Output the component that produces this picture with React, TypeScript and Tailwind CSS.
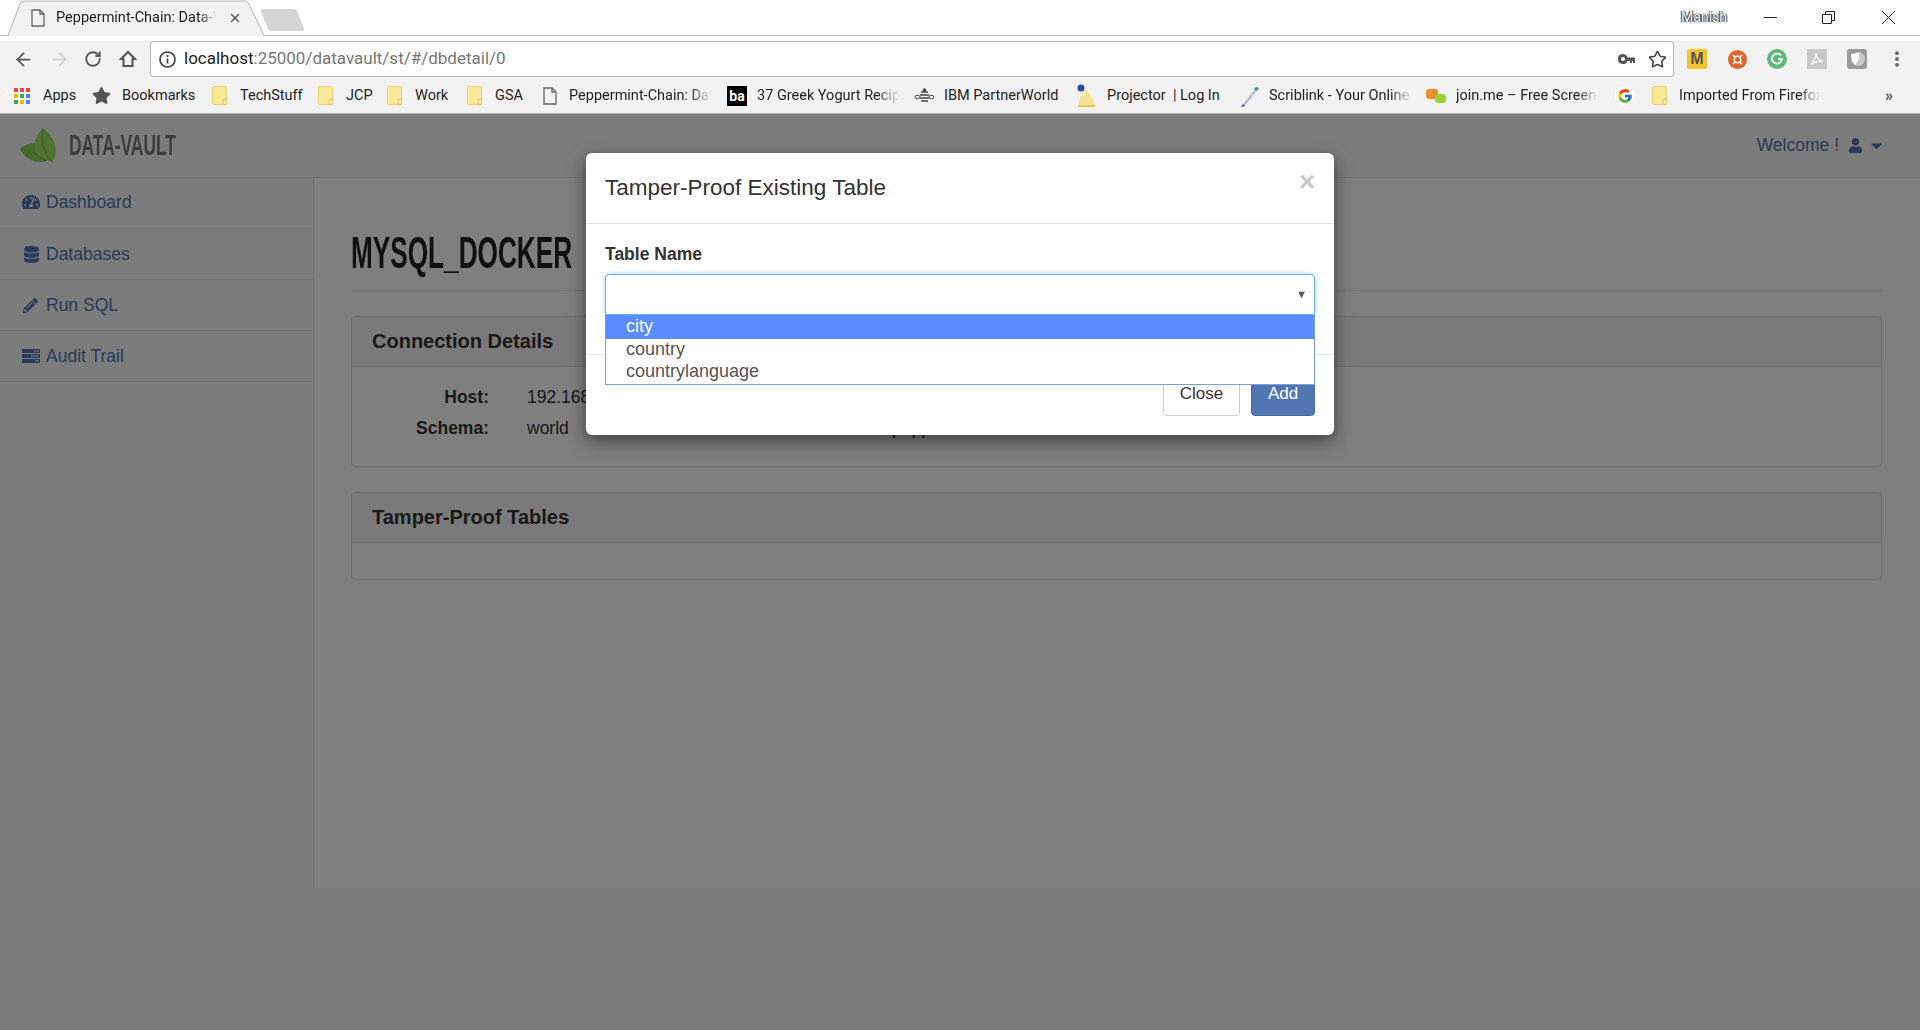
import { ArrowLeft, ArrowRight, RotateCw, Star, X, MoreVertical } from 'lucide-react';
import { FaTachometerAlt, FaDatabase, FaPencilAlt, FaUser, FaCaretDown, FaStar } from 'react-icons/fa';
import { FcGoogle } from 'react-icons/fc';
import type { ReactNode } from 'react';

function DocIcon() {
  return (
    <svg width="14" height="18" viewBox="0 0 14 18" fill="none" stroke="#666" strokeWidth="1.3">
      <path d="M1 1h8l4 4v12H1z" />
      <path d="M9 1v4h4" />
    </svg>
  );
}

function FolderIcon() {
  return (
    <svg width="15" height="19" viewBox="0 0 15 19">
      <rect x="0.5" y="0.5" width="14" height="18" rx="1.5" fill="#f9e79a" stroke="#ecd277" />
      <rect x="11" y="13" width="3.5" height="5.5" rx="1" fill="#f9e79a" stroke="#e0c060" strokeWidth="0.8" />
    </svg>
  );
}

function AppsIcon() {
  const colors = ['#e8453c', '#e8453c', '#e8453c', '#f4b400', '#34a853', '#4285f4', '#34a853', '#f4b400', '#4285f4'];
  return (
    <div className="grid grid-cols-3 gap-[2px] w-[16px]">
      {colors.map((c, i) => (
        <svg key={i} width="4" height="4"><rect width="4" height="4" fill={c} /></svg>
      ))}
    </div>
  );
}

function BeeIcon() {
  return (
    <svg width="21" height="16" viewBox="0 0 21 16" fill="none" stroke="#444" strokeWidth="1">
      <ellipse cx="3.5" cy="9" rx="2.5" ry="1.7" />
      <ellipse cx="17.5" cy="9" rx="2.5" ry="1.7" />
      <path d="M7 4h7M6 7h9M6 10h9M7 13h7" strokeWidth="1.6" />
      <circle cx="10.5" cy="2" r="1.3" fill="#444" />
    </svg>
  );
}

function ProjectorIcon() {
  return (
    <svg width="20" height="24" viewBox="0 0 20 24">
      <path d="M6 7l5-2 8 16H2z" fill="#f7e39a" />
      <path d="M2 21h17v2H2z" fill="#e8c455" />
      <circle cx="5" cy="4" r="3.5" fill="#2b4aa8" />
    </svg>
  );
}

function PenIcon() {
  return (
    <svg width="20" height="24" viewBox="0 0 20 24">
      <path d="M1 23L16 3l3 1L5 22z" fill="#b9c6d6" />
      <path d="M14 5.500L16 3l3 1-2 3z" fill="#5f7f9f" />
      <path d="M1 23l4-1-2-2z" fill="#555" />
    </svg>
  );
}

function JoinIcon() {
  return (
    <svg width="20" height="16" viewBox="0 0 20 16">
      <rect x="0" y="1" width="12" height="10" rx="3" fill="#e8902c" />
      <rect x="9" y="6" width="11" height="9" rx="3.500" fill="#9bd32e" />
    </svg>
  );
}

function TasksIcon() {
  return (
    <svg width="18" height="14" viewBox="0 0 18 14" fill="#5276b2">
      <path d="M0 0h18v4H0zM0 5h18v4H0zM0 10h18v4H0z" />
      <path d="M12 1.500h5v1h-5zM9 6.500h8v1H9zM13 11.500h4v1h-4z" fill="#f8f8f8" />
    </svg>
  );
}

function LeafLogo() {
  return (
    <svg width="36" height="36" viewBox="0 0 36 36">
      <path d="M0 21C5 16 12 14 18 16C20 22 24 29 27 33C16 36 6 32 0 21Z" fill="#8fd65c" />
      <path d="M23 0C30 5 36 14 36 23C36 28 34 32 32 33L34 36L30 33C24 33 16 28 15 20C14 12 18 5 23 0Z" fill="#a0e668" />
      <path d="M23 1C21 12 23 24 31 33M1 21C9 22 18 26 26 33" stroke="#6cae42" strokeWidth="0.8" fill="none" />
    </svg>
  );
}

type Mark = { icon: ReactNode; iconBox: string; label: string; box: string; fade?: boolean };

const bookmarks: Mark[] = [
  { icon: <AppsIcon />, iconBox: 'w-[29px]', label: 'Apps', box: 'w-[78px]' },
  { icon: <FaStar className="text-[19px] text-[#555]" />, iconBox: 'w-[30px]', label: 'Bookmarks', box: 'w-[120px]' },
  { icon: <FolderIcon />, iconBox: 'w-[28px]', label: 'TechStuff', box: 'w-[106px]' },
  { icon: <FolderIcon />, iconBox: 'w-[28px]', label: 'JCP', box: 'w-[69px]' },
  { icon: <FolderIcon />, iconBox: 'w-[28px]', label: 'Work', box: 'w-[80px]' },
  { icon: <FolderIcon />, iconBox: 'w-[28px]', label: 'GSA', box: 'w-[76px]' },
  { icon: <DocIcon />, iconBox: 'w-[26px]', label: 'Peppermint-Chain: Data-Vault', box: 'w-[184px]', fade: true },
  {
    icon: <span className="flex w-[20px] h-[20px] items-center justify-center bg-black text-white text-[14px] font-bold leading-none">ba</span>,
    iconBox: 'w-[30px]',
    label: '37 Greek Yogurt Recipes',
    box: 'w-[187px]',
    fade: true,
  },
  { icon: <BeeIcon />, iconBox: 'w-[30px]', label: 'IBM PartnerWorld', box: 'w-[162px]' },
  { icon: <ProjectorIcon />, iconBox: 'w-[31px]', label: 'Projector  | Log In', box: 'w-[164px]' },
  { icon: <PenIcon />, iconBox: 'w-[29px]', label: 'Scriblink - Your Online Whiteboard', box: 'w-[186px]', fade: true },
  { icon: <JoinIcon />, iconBox: 'w-[30px]', label: 'join.me – Free Screen Sharing', box: 'w-[189px]', fade: true },
  { icon: <span className="flex w-[19px] h-[19px] items-center justify-center bg-white rounded-full"><FcGoogle className="text-[16px]" /></span>, iconBox: 'w-[37px]', label: '', box: 'w-[37px]' },
  { icon: <FolderIcon />, iconBox: 'w-[27px]', label: 'Imported From Firefox', box: 'w-[168px]', fade: true },
];

function Bookmark({ item }: { item: Mark }) {
  return (
    <div className={`flex items-center shrink-0 overflow-hidden ${item.box}`}>
      <div className={`flex items-center shrink-0 ${item.iconBox}`}>{item.icon}</div>
      {item.label && (
        <span
          className={`whitespace-pre overflow-hidden ${
            item.fade ? 'w-[142px] [mask-image:linear-gradient(to_right,black_85%,transparent)]' : ''
          }`}
        >
          {item.label}
        </span>
      )}
    </div>
  );
}

function BrowserChrome() {
  return (
    <div className="font-['Roboto',sans-serif] text-[#222]">
      {/* tab strip */}
      <div className="relative flex items-start h-[36px] bg-white border-b border-[#b4b4b4]">
        <div className="relative ml-[8px] w-[256px] h-[36px] shrink-0 flex items-center text-[14.500px]">
          <svg className="absolute inset-0" width="256" height="36" viewBox="0 0 256 36">
            <path d="M0 35.500L12 4Q13 1 17 1H236Q240 1 241 4L256 35.500Z" fill="#f2f2f2" stroke="#b4b4b4" />
            <path d="M1 35.500H255" stroke="#f2f2f2" strokeWidth="1.500" />
          </svg>
          <div className="relative flex items-center ml-[23px] pb-[1px]">
            <DocIcon />
            <span className="ml-[11px] w-[160px] whitespace-nowrap overflow-hidden [mask-image:linear-gradient(to_right,black_90%,transparent)]">
              Peppermint-Chain: Data-Vault
            </span>
            <X size={14} strokeWidth={2.400} className="ml-[12px] text-[#555]" />
          </div>
        </div>
        <svg className="ml-[-3px] mt-[9px] shrink-0" width="44" height="22" viewBox="0 0 44 22">
          <path d="M2 0H33Q35 0 36 2L43 19Q44 22 41 22H10Q8 22 7 20L0 3Q0 0 2 0Z" fill="#d4d4d4" />
        </svg>
        <span className="ml-auto mt-[7px] mr-[193px] text-[14px] text-white [text-shadow:0_0_1px_#222,1px_0_1px_#333,-1px_0_1px_#333]">Manish</span>
        <div className="absolute right-0 top-0 flex items-center h-[34px] text-[#222]">
          <svg width="13" height="13" className="mr-[45px]"><path d="M0 6.500h13" stroke="#222" /></svg>
          <svg width="13" height="13" className="mr-[47px]" fill="none" stroke="#222"><path d="M.5 3.500h9v9h-9zM3.500 3V.5h9v9H10" /></svg>
          <svg width="13" height="13" className="mr-[25px]" stroke="#222"><path d="M0 0l13 13M13 0L0 13" /></svg>
        </div>
      </div>

      {/* toolbar */}
      <div className="bg-[#f2f2f2] border-b border-[#b4b4b4]">
        <div className="flex items-center h-[36px] mt-[5px] pl-[5px]">
          <div className="flex justify-center w-[36px]"><ArrowLeft size={21} strokeWidth={2} className="text-[#555]" /></div>
          <div className="flex justify-center w-[37px]"><ArrowRight size={21} strokeWidth={2} className="text-[#d0d0d0]" /></div>
          <div className="flex justify-center w-[30px]"><RotateCw size={18} strokeWidth={2.400} className="text-[#555]" /></div>
          <div className="flex justify-center w-[42px] pr-[2px]">
            <svg width="18" height="18" viewBox="0 0 18 18" fill="none" stroke="#555" strokeWidth="2"><path d="M9 2L2 9h2.500v7h9V9H16z" /></svg>
          </div>
          <div className="flex items-center flex-1 h-[36px] bg-white border border-[#b4b4b4] rounded-[3px] pl-[8px] pr-[6px]">
            <svg width="17" height="17" viewBox="0 0 17 17" fill="none" stroke="#444" strokeWidth="1.700">
              <circle cx="8.500" cy="8.500" r="7.500" />
              <path d="M8.500 7.500v5M8.500 4v2" />
            </svg>
            <span className="ml-[8px] text-[17px]">
              localhost<span className="text-[#777]">:25000/datavault/st/#/dbdetail/0</span>
            </span>
            <svg className="ml-auto" width="18" height="12" viewBox="0 0 18 12" fill="#555">
              <path d="M5 1a5 5 0 1 0 4.500 7H12v2h2V8h1v2h2V4.500H9.500A5 5 0 0 0 5 1zm0 3a2 2 0 1 1 0 4 2 2 0 0 1 0-4z" />
            </svg>
            <Star size={19} strokeWidth={2} className="ml-[12px] text-[#444]" />
          </div>
          <div className="flex items-center pl-[3px] pr-[3px] shrink-0">
            <div className="flex justify-center w-[40px]">
              <span className="flex w-[20px] h-[20px] items-center justify-center bg-[#f4c430] rounded-[2px] text-[#555] text-[16px] font-bold font-['Liberation_Sans',sans-serif]">M</span>
            </div>
            <div className="flex justify-center w-[40px]">
              <svg width="19" height="19" viewBox="0 0 19 19">
                <circle cx="9.500" cy="9.500" r="9.500" fill="#e0662b" />
                <path d="M5 5l9 9M14 5l-9 9" stroke="#fff" strokeWidth="1.500" />
                <circle cx="9.500" cy="9.500" r="3.200" fill="#e0662b" stroke="#fff" strokeWidth="1.400" />
              </svg>
            </div>
            <div className="flex justify-center w-[40px]">
              <svg width="20" height="20" viewBox="0 0 20 20" fill="none">
                <circle cx="10" cy="10" r="10" fill="#5db97a" />
                <path d="M14 6.500A5 5 0 1 0 15 10h-4" stroke="#fff" strokeWidth="1.800" />
              </svg>
            </div>
            <div className="flex justify-center w-[40px]">
              <svg width="20" height="20" viewBox="0 0 20 20" fill="none">
                <rect width="20" height="20" fill="#c9c9c9" />
                <path d="M4 15c3-2 5-7 5-11 0 4 2 7 7 8-4 0-8 1-12 3z" stroke="#fff" strokeWidth="1.100" />
              </svg>
            </div>
            <div className="flex justify-center w-[40px]">
              <svg width="20" height="20" viewBox="0 0 20 20">
                <rect width="20" height="20" rx="3" fill="#9a9a9a" />
                <circle cx="11" cy="10" r="7" fill="#c9c9c9" />
                <path d="M4 5c3 0 6-.5 8-1 1 5-1 9-4 12-2-3-4-7-4-11z" fill="#fff" />
              </svg>
            </div>
            <div className="flex justify-center w-[40px]"><MoreVertical size={20} strokeWidth={2.600} className="text-[#666]" /></div>
          </div>
        </div>

        {/* bookmarks bar */}
        <div className="relative flex items-center h-[36px] pt-[1px] pl-[14px] text-[14.500px]">
          {bookmarks.map((b, i) => (
            <Bookmark key={i} item={b} />
          ))}
          <span className="absolute right-[27px] text-[16px] text-[#555] font-bold">»</span>
        </div>
      </div>
    </div>
  );
}

const navItems = [
  { label: 'Dashboard', icon: <FaTachometerAlt className="text-[18px]" /> },
  { label: 'Databases', icon: <FaDatabase className="text-[17px] ml-[1px]" /> },
  { label: 'Run SQL', icon: <FaPencilAlt className="text-[15px] ml-[1px]" /> },
  { label: 'Audit Trail', icon: <TasksIcon /> },
];

function Sidebar() {
  return (
    <div className="w-[314px] shrink-0 border-r border-[#e7e7e7]">
      {navItems.map((n) => (
        <div key={n.label} className="flex items-center h-[51px] first:pb-[2px] pl-[22px] border-b border-[#e7e7e7] text-[#5276b2] text-[17.500px]">
          <span className="flex items-center w-[24px]">{n.icon}</span>
          {n.label}
        </div>
      ))}
    </div>
  );
}

function Panel({ title, children }: { title: string; children: ReactNode }) {
  return (
    <div className="border border-[#ddd] rounded-[4px] bg-white mb-[25px]">
      <div className="flex items-center h-[50px] pl-[20px] pb-[2px] bg-[#f5f5f5] border-b border-[#ddd] rounded-t-[4px] text-[20px] font-bold text-[#333]">
        {title}
      </div>
      {children}
    </div>
  );
}

function Row({ a, b, c, d }: { a: string; b: string; c: string; d: string }) {
  return (
    <div className="flex items-center h-[31px] text-[17.500px] text-[#333]">
      <span className="w-[136px] text-right font-bold">{a}</span>
      <span className="ml-[38px] w-[175px]">{b}</span>
      <span className="w-[152px] text-right font-bold">{c}</span>
      <span className="ml-[38px]">{d}</span>
    </div>
  );
}

function Modal() {
  return (
    <div className="absolute z-10 left-[586px] top-[39px] w-[748px] h-[282px] bg-white rounded-[6px] shadow-[0_6px_18px_rgba(0,0,0,0.5)] text-[#333]">
      <div className="relative flex items-center h-[71px] pl-[19px] border-b border-[#e5e5e5] text-[22.500px]">
        Tamper-Proof Existing Table
        <span className="absolute right-[19px] top-[15px] text-[27px] leading-[28px] font-bold text-[#c9c9c9]">×</span>
      </div>
      <div className="relative h-[130px] px-[19px] pt-[20px]">
        <div className="h-[20px] leading-[20px] text-[17.500px] font-bold">Table Name</div>
        <div className="relative mt-[10px]">
          <div className="flex items-center justify-end h-[41px] pr-[7px] border border-[#66afe9] rounded-t-[4px] shadow-[0_0_5px_rgba(102,175,233,0.6)] text-[11px] text-[#555]">
            ▼
          </div>
          <div className="absolute z-20 left-0 right-0 top-[41px] h-[70px] bg-white border border-[#7f9ddb] border-t-0 text-[18px] text-[#555]">
            <div className="h-[24px] leading-[23px] pl-[20px] bg-[#5a8dfb] text-white">city</div>
            <div className="h-[22px] leading-[21px] pl-[20px]">country</div>
            <div className="h-[22px] leading-[21px] pl-[20px]">countrylanguage</div>
          </div>
        </div>
      </div>
      <div className="flex justify-end gap-[11px] pr-[19px] pt-[15px] border-t border-[#e5e5e5]">
        <button className="w-[77px] h-[46px] pt-[2px] bg-white border border-[#ccc] rounded-[4px] text-[17px] text-[#333]">Close</button>
        <button className="w-[64px] h-[46px] pt-[2px] bg-[#5276b2] border border-[#4a6ca5] rounded-[4px] text-[17px] text-white">Add</button>
      </div>
    </div>
  );
}

export default function App() {
  return (
    <div className="h-[1030px] overflow-hidden bg-white">
      <BrowserChrome />
      <div className="relative h-[916px] overflow-hidden bg-[#f8f8f8] font-['Liberation_Sans',Arial,sans-serif]">
        {/* navbar */}
        <div className="flex items-center h-[64px] border-b border-[#e7e7e7] pl-[20px] pr-[35px]">
          <LeafLogo />
          <div className="ml-[13px] text-[29px] font-bold text-[#7a7a7a] w-[107px] origin-left scale-x-[0.6] whitespace-nowrap">DATA-VAULT</div>
          <div className="ml-auto flex items-center text-[17.500px] text-[#5276b2]">
            Welcome !
            <FaUser className="ml-[9px] text-[15px]" />
            <FaCaretDown className="ml-[5px] text-[17px]" />
          </div>
        </div>

        <div className="flex items-start">
          <div className="h-[710px] flex"><Sidebar /></div>
          <div className="flex-1 h-[710px] bg-white pl-[37px] pr-[38px] pt-[55px]">
            <div className="h-[58px] mb-[25px] border-b border-[#eee]">
              <h1 className="text-[44px] leading-[40px] font-bold text-[#222] origin-left scale-x-[0.595] whitespace-nowrap">MYSQL_DOCKER</h1>
            </div>
            <Panel title="Connection Details">
              <div className="pt-[15px] pb-[22px] pl-[1px]">
                <Row a="Host:" b="192.168.99.100" c="Port:" d="3306" />
                <Row a="Schema:" b="world" c="User:" d="peppermint" />
              </div>
            </Panel>
            <Panel title="Tamper-Proof Tables">
              <div className="h-[36px]" />
            </Panel>
          </div>
        </div>

        <div className="absolute inset-0 bg-black/50" />
        <Modal />
      </div>
    </div>
  );
}
